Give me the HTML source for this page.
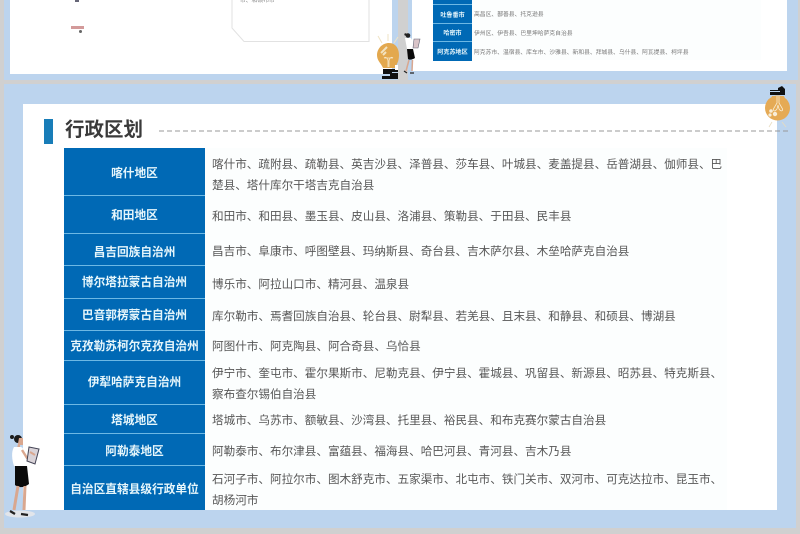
<!DOCTYPE html>
<html><head><meta charset="utf-8">
<style>
html,body{margin:0;padding:0}
body{width:800px;height:534px;overflow:hidden;background:#d0d0d0;position:relative;font-family:"Liberation Sans","Noto Sans CJK SC",sans-serif}
.a{position:absolute}
.l{position:absolute;left:64px;width:141px;background:#0069b5;color:#e6f6fb;font-weight:700;font-size:11.7px;display:flex;align-items:center;justify-content:center;white-space:nowrap;box-sizing:border-box;border-bottom:1px solid #6db8e4}
.t{position:absolute;left:212px;width:512px;color:#575757;font-size:11.6px;line-height:21px;white-space:nowrap}
.sl{position:absolute;left:433px;width:39px;background:#0069b5;color:#e6f6fb;font-weight:700;font-size:6.1px;display:flex;align-items:center;justify-content:center;white-space:nowrap;box-sizing:border-box;border-bottom:.5px solid #6db8e4}
.st{position:absolute;left:474px;color:#777;font-size:5.8px;line-height:8px;white-space:nowrap}
</style></head><body>
<div class="a" style="left:4px;top:0;width:394px;height:80px;background:#bcd4ee"></div>
<div class="a" style="left:10px;top:0;width:382px;height:74px;background:#fff"></div>
<svg class="a" style="left:231px;top:0" width="140" height="43"><path d="M1 0V28L13 41.500H138V0" fill="#fff" stroke="#e2e2e2" stroke-width="1"/></svg>
<div class="a" style="left:240px;top:-3px;font-size:5.800px;line-height:8px;color:#888">市、和硕布市</div>
<div class="a" style="left:71px;top:26px;width:13px;height:2.500px;background:#d39a9a"></div>
<div class="a" style="left:78.500px;top:29.500px;width:3px;height:3px;border-radius:50%;background:#666"></div>
<div class="a" style="left:75px;top:0;width:4px;height:1.500px;background:#667"></div>

<div class="a" style="left:404px;top:0;width:396px;height:80px;background:#d0d0d0"></div>
<div class="a" style="left:408px;top:0;width:390px;height:80px;background:#bcd4ee"></div>
<div class="a" style="left:412px;top:0;width:375px;height:71px;background:#fff"></div>
<div class="a" style="left:472px;top:0;width:289px;height:60px;background:#fcfefe"></div>
<div class="sl" style="top:0;height:5px"></div>
<div class="sl" style="top:5px;height:19px">吐鲁番市</div>
<div class="sl" style="top:24px;height:18px">哈密市</div>
<div class="sl" style="top:42px;height:19px;border:0">阿克苏地区</div>
<div class="st" style="top:11px">高昌区、鄯善县、托克逊县</div>
<div class="st" style="top:30px">伊州区、伊吾县、巴里坤哈萨克自治县</div>
<div class="st" style="top:49px">阿克苏市、温宿县、库车市、沙雅县、新和县、拜城县、乌什县、阿瓦提县、柯坪县</div>

<div class="a" style="left:4px;top:84px;width:792px;height:444px;background:#bcd4ee"></div>
<div class="a" style="left:23px;top:104px;width:754px;height:406px;background:#fff"></div>
<div class="a" style="left:205px;top:148px;width:522px;height:362px;background:#fcfefe"></div>
<div class="a" style="left:44px;top:119px;width:9px;height:25px;background:#187db8"></div>
<div class="a" style="left:65px;top:117px;font-size:19.500px;line-height:27px;font-weight:700;color:#3a3a3a">行政区划</div>
<svg class="a" style="left:159px;top:130px" width="630" height="2"><line x1="0" y1="1" x2="630" y2="1" stroke="#999" stroke-width="1" stroke-dasharray="5 3"/></svg>

<div class="l" style="top:148px;height:48px;padding-top:2px">喀什地区</div>
<div class="l" style="top:196px;height:38px">和田地区</div>
<div class="l" style="top:234px;height:32px;padding-top:3px">昌吉回族自治州</div>
<div class="l" style="top:266px;height:33px;padding-bottom:2px">博尔塔拉蒙古自治州</div>
<div class="l" style="top:299px;height:32px">巴音郭楞蒙古自治州</div>
<div class="l" style="top:331px;height:30px">克孜勒苏柯尔克孜自治州</div>
<div class="l" style="top:361px;height:44px;padding-bottom:2px">伊犁哈萨克自治州</div>
<div class="l" style="top:405px;height:29px">塔城地区</div>
<div class="l" style="top:434px;height:32px;padding-top:2px">阿勒泰地区</div>
<div class="l" style="top:466px;height:44px;border:0">自治区直辖县级行政单位</div>

<div class="t" style="top:154px">喀什市、疏附县、疏勒县、英吉沙县、泽普县、莎车县、叶城县、麦盖提县、岳普湖县、伽师县、巴<br>楚县、塔什库尔干塔吉克自治县</div>
<div class="t" style="top:206px">和田市、和田县、墨玉县、皮山县、洛浦县、策勒县、于田县、民丰县</div>
<div class="t" style="top:241px">昌吉市、阜康市、呼图壁县、玛纳斯县、奇台县、吉木萨尔县、木垒哈萨克自治县</div>
<div class="t" style="top:274px">博乐市、阿拉山口市、精河县、温泉县</div>
<div class="t" style="top:306px">库尔勒市、焉耆回族自治县、轮台县、尉犁县、若羌县、且末县、和静县、和硕县、博湖县</div>
<div class="t" style="top:336px">阿图什市、阿克陶县、阿合奇县、乌恰县</div>
<div class="t" style="top:363px">伊宁市、奎屯市、霍尔果斯市、尼勒克县、伊宁县、霍城县、巩留县、新源县、昭苏县、特克斯县、<br>察布查尔锡伯自治县</div>
<div class="t" style="top:410px">塔城市、乌苏市、额敏县、沙湾县、托里县、裕民县、和布克赛尔蒙古自治县</div>
<div class="t" style="top:441px">阿勒泰市、布尔津县、富蕴县、福海县、哈巴河县、青河县、吉木乃县</div>
<div class="t" style="top:469px">石河子市、阿拉尔市、图木舒克市、五家渠市、北屯市、铁门关市、双河市、可克达拉市、昆玉市、<br>胡杨河市</div>

<!-- top bulb (absolute coords) -->
<svg class="a" style="left:370px;top:30px" width="52" height="50" viewBox="370 30 52 50">
<path d="M378 36L382 43M388 34V41M398 37L394 43" stroke="#efe3c4" stroke-width="1" fill="none"/>
<path d="M389 43C382 43 377 49 377 55C377 61 381 63 383 68H395C397 64 399 61 399 55C399 49 396 43 389 43Z" fill="#e3a84e"/>
<path d="M381 53L387 47M383 55L386 52" stroke="#f3e3c0" stroke-width="2"/>
<path d="M384 58C386 56 388 59 388 61V67M393 58C391 56 389 59 389 61V67M384 58H393" stroke="#f6e7c8" stroke-width=".8" fill="none"/>
<path d="M383 69H398V72H392V73H398V79H382V76H390V74H383Z" fill="#111"/>
<rect x="395" y="65" width="3" height="5" fill="#fff"/>
<circle cx="408" cy="35.500" r="2.300" fill="#222"/><circle cx="405.500" cy="34.500" r="1.200" fill="#222"/>
<path d="M405 38H411L415 46L412 47V49H407Z" fill="#fff"/>
<path d="M407 49H413L415 58C412 60 409 60 408 59Z" fill="#0a0a0a"/>
<path d="M409 60L406 71M412.500 60L412 71" stroke="#d9a78f" stroke-width="1.500" fill="none"/>
<path d="M404 71L407 73M410 73H414" stroke="#222" stroke-width="1.200"/>
<path d="M414 39H420L418 48H413Z" fill="#d9c4c8" stroke="#667" stroke-width=".6"/>
</svg>
<!-- right bulb (absolute coords) -->
<svg class="a" style="left:760px;top:82px" width="36" height="50" viewBox="760 82 36 50">
<path d="M770 90H778V88L782 86L785 89V95H770V92H780V91H770Z" fill="#111"/>
<path d="M772 96H784L786 101H770Z" fill="#e5aa55"/>
<circle cx="777.500" cy="108" r="12.500" fill="#e5aa55"/>
<path d="M777 96V103L774 108C772 111 775 112 777 109L778 105L779 109C781 112 784 111 782 108L779 103V96" stroke="#f9ecd2" stroke-width=".8" fill="none"/>
<circle cx="771" cy="111" r="1.800" fill="#f8edd8"/><circle cx="775" cy="114" r="2.200" fill="#f8edd8"/><circle cx="770" cy="115" r="1.600" fill="#f8edd8"/>
<path d="M772 122L769 127M782 122L786 127" stroke="#e8dcc0" stroke-width=".8"/>
</svg>
<!-- big woman (absolute coords) -->
<svg class="a" style="left:0;top:430px" width="50" height="95" viewBox="0 430 50 95">
<ellipse cx="20" cy="514" rx="15" ry="3.500" fill="#e2e5ea"/>
<circle cx="18" cy="439" r="4" fill="#1c1c1c"/><circle cx="12" cy="437" r="2" fill="#1c1c1c"/>
<path d="M19 438H23L23 445H20L20 449H17Z" fill="#d9a78f"/>
<path d="M14 447L21 447C24 448 26 455 27 460L26 466H14C12 460 11 452 14 447Z" fill="#fff"/>
<path d="M22 450L27 458L33 461L36 457" stroke="#d9a78f" stroke-width="2.400" fill="none"/>
<path d="M15 466H27L29 484C24 488 18 488 15 485Z" fill="#0a0a0a"/>
<path d="M18 486L14 510M25 486L24 510" stroke="#d9a78f" stroke-width="3" fill="none"/>
<path d="M10 511L15 514M21 514L28 515" stroke="#222" stroke-width="2.200"/>
<path d="M29 447L39 449L35 464L27 461Z" fill="#d9d3d8" stroke="#445" stroke-width="1"/>
<path d="M30 452L35 455" stroke="#d9a78f" stroke-width="2"/>
</svg>
</body></html>
